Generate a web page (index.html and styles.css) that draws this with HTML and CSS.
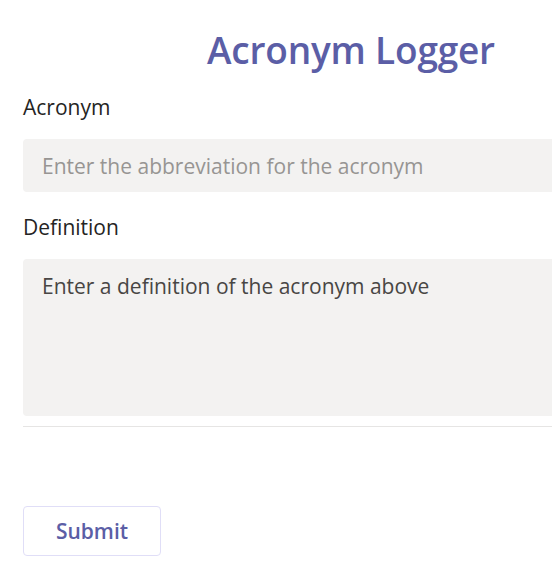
FILE: index.html
```html
<!DOCTYPE html>
<html lang="en">

<head>
    <meta charset="UTF-8">
    <meta name="viewport" content="width=device-width, initial-scale=1.0">
    <title>Acronym Logger</title>
    <link rel="stylesheet" href="styles.css">
</head>

<body>
    <div class="container">
        <h1>Acronym Logger</h1>
        <div class="form-group">
            <label for="acronym">Acronym</label>
            <input type="text" id="acronym" placeholder="Enter the abbreviation for the acronym">
        </div>
        <div class="form-group">
            <label for="definition">Definition</label>
            <textarea id="definition">Enter a definition of the acronym above</textarea>
        </div>
        <hr class="divider">
        <button class="submit">Submit</button>
    </div>
</body>

</html>
```

FILE: styles.css
```css
html,
body {
    overflow: hidden;
}

body {
    margin: 0;
    font-family: 'Open Sans', 'Noto Sans', Arial, sans-serif;
    background-color: white;
    color: #252423;
}

.container {
    width: 656px;
    padding-left: 23px;
    padding-top: 25px;
}

h1 {
    margin: 0;
    text-align: center;
    color: #5b5ea6;
    font-size: 37px;
    font-weight: 600;
    letter-spacing: -0.2px;
    line-height: 50px;
}

.form-group {
    margin-top: 18px;
}

.form-group + .form-group {
    margin-top: 21px;
}

label {
    display: block;
    font-size: 21px;
    line-height: 28px;
    margin-bottom: 18px;
}

input,
textarea {
    display: block;
    box-sizing: border-box;
    width: 100%;
    border: none;
    border-radius: 4px;
    background-color: #f3f2f1;
    font-family: inherit;
    font-size: 21px;
    line-height: 28px;
    padding: 0 19px;
    color: #484644;
    outline: none;
}

input {
    height: 53px;
}

input::placeholder {
    color: #979593;
}

textarea {
    height: 157px;
    padding-top: 13px;
    resize: none;
}

.divider {
    margin: 10px 0 0;
    border: none;
    border-top: 1px solid #e6e5e4;
}

.submit {
    margin-top: 79px;
    width: 138px;
    height: 50px;
    background-color: white;
    border: 1px solid #e0def7;
    border-radius: 4px;
    color: #5b5ea6;
    font-family: inherit;
    font-size: 21px;
    font-weight: 600;
    cursor: pointer;
}
```
